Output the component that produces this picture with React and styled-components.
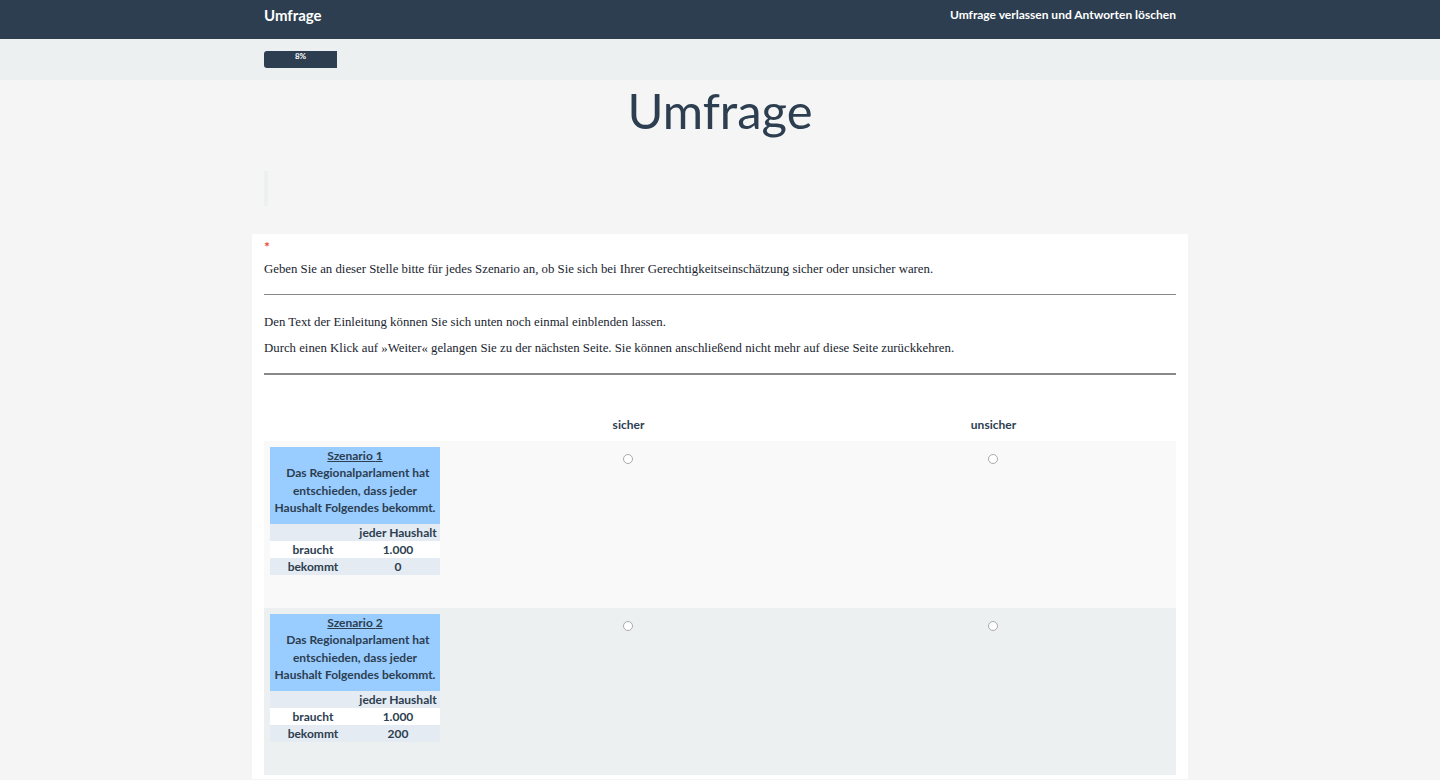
import React from "react";
import styled, { createGlobalStyle } from "styled-components";

const Global = createGlobalStyle`
  html, body { margin: 0; padding: 0; }
  body { background: #f5f5f5; font-family: Lato, "Open Sans", sans-serif; color: #2c3e50; }
`;

const Navbar = styled.header`
  background: #2c3e50;
  height: 39px;
`;
const Container = styled.div`
  width: 912px;
  margin: 0 auto;
`;
const NavInner = styled(Container)`
  display: flex;
  justify-content: space-between;
  align-items: center;
  height: 100%;
`;
const Brand = styled.span`
  color: #fff;
  font-size: 15px;
  font-weight: 700;
  position: relative;
  top: -5px;
`;
const NavLink = styled.span`
  color: #fff;
  font-size: 12px;
  font-weight: 700;
  position: relative;
  top: -5px;
`;
const ProgressBand = styled.div`
  background: #ecf0f1;
  height: 41px;
  padding-top: 12px;
  box-sizing: border-box;
`;
const Track = styled(Container)`
  height: 17px;
`;
const Bar = styled.div`
  height: 100%;
  background: #2c3e50;
  border-radius: 3px 0 0 3px;
  color: #fff;
  font-size: 8px;
  font-weight: 700;
  text-align: center;
  line-height: 10px;
`;
const Title = styled.h1`
  margin: 0;
  padding-top: 2px;
  text-align: center;
  font-size: 49px;
  font-weight: 400;
  line-height: 56px;
  color: #2c3e50;
`;
const Quote = styled(Container)`
  margin-top: 33px;
  height: 35px;
  border-left: 4px solid #ecf0f1;
  box-sizing: border-box;
`;
const Panel = styled.main`
  width: 936px;
  margin: 28px auto 0;
  background: #fff;
  padding: 6px 12px 4px;
  box-sizing: border-box;
`;
const Asterisk = styled.div`
  color: #e74c3c;
  font-size: 14px;
  font-weight: 700;
  line-height: 14px;
`;
const Serif = styled.p`
  font-family: "Liberation Serif", "Times New Roman", serif;
  font-size: 12.8px;
  line-height: 16px;
  margin: ${(p) => p.$m || "0"};
  color: #1a2530;
`;
const Rule = styled.hr`
  border: 0;
  border-top: ${(p) => p.$w || 1}px solid #888;
  margin: 0;
`;
const Grid = styled.div`
  display: grid;
  grid-template-columns: 182px 365px 365px;
  margin-top: 38px;
`;
const Head = styled.div`
  text-align: center;
  font-size: 12px;
  font-weight: 700;
  height: 28px;
  line-height: 23px;
`;
const Row = styled.div`
  display: contents;
`;
const Cell = styled.div`
  background: ${(p) => (p.$alt ? "#ecf0f1" : "#f9f9f9")};
  height: 167px;
  box-sizing: border-box;
  padding: ${(p) => (p.$first ? "6px 6px" : "6px 0")};
  display: flex;
  justify-content: center;
  align-items: flex-start;
`;
const Radio = styled.span`
  display: block;
  width: 8px;
  height: 8px;
  margin-top: 7px;
  margin-left: -2px;
  border-radius: 50%;
  border: 1px solid #aaa;
  background: #fff;
`;
const Scenario = styled.table`
  width: 170px;
  border-collapse: collapse;
  font-size: 12px;
  font-weight: 700;
  color: #2c3e50;
  td { padding: 0; height: 17px; line-height: 17px; text-align: center; }
`;
const BlueCell = styled.td`
  background: #9cf;
  && { height: 77px; line-height: 17.4px; vertical-align: top; padding-top: 0; }
`;
const Under = styled.span`
  text-decoration: underline;
`;
const TRow = styled.tr`
  background: ${(p) => (p.$bg ? "#e5ebf2" : "#fff")};
`;

const scenarios = [
  { n: 1, got: "0" },
  { n: 2, got: "200" },
];

export default function App() {
  return (
    <>
      <Global />
      <Navbar>
        <NavInner>
          <Brand>Umfrage</Brand>
          <NavLink>Umfrage verlassen und Antworten löschen</NavLink>
        </NavInner>
      </Navbar>
      <ProgressBand>
        <Track>
          <Bar style={{ width: "8%" }}>8%</Bar>
        </Track>
      </ProgressBand>
      <Title>Umfrage</Title>
      <Quote />
      <Panel>
        <Asterisk>*</Asterisk>
        <Serif $m="7px 0 17px">
          Geben Sie an dieser Stelle bitte für jedes Szenario an, ob Sie sich bei Ihrer Gerechtigkeitseinschätzung sicher oder unsicher waren.
        </Serif>
        <Rule />
        <Serif $m="19px 0 10px">Den Text der Einleitung können Sie sich unten noch einmal einblenden lassen.</Serif>
        <Serif $m="0 0 17px">Durch einen Klick auf »Weiter« gelangen Sie zu der nächsten Seite. Sie können anschließend nicht mehr auf diese Seite zurückkehren.</Serif>
        <Rule $w={2} />
        <Grid>
          <Head />
          <Head>sicher</Head>
          <Head>unsicher</Head>
          {scenarios.map((s) => (
            <Row key={s.n}>
              <Cell $first $alt={s.n % 2 === 0}>
                <Scenario>
                  <tbody>
                    <tr>
                      <BlueCell colSpan={2}>
                        <Under>Szenario {s.n}</Under>
                        <br />
                        &nbsp; Das Regionalparlament hat entschieden, dass jeder Haushalt Folgendes bekommt.
                      </BlueCell>
                    </tr>
                    <TRow $bg>
                      <td style={{ width: 86 }}></td>
                      <td>jeder Haushalt</td>
                    </TRow>
                    <TRow>
                      <td>braucht</td>
                      <td>1.000</td>
                    </TRow>
                    <TRow $bg>
                      <td>bekommt</td>
                      <td>{s.got}</td>
                    </TRow>
                  </tbody>
                </Scenario>
              </Cell>
              <Cell $alt={s.n % 2 === 0}>
                <Radio />
              </Cell>
              <Cell $alt={s.n % 2 === 0}>
                <Radio />
              </Cell>
            </Row>
          ))}
        </Grid>
      </Panel>
    </>
  );
}
